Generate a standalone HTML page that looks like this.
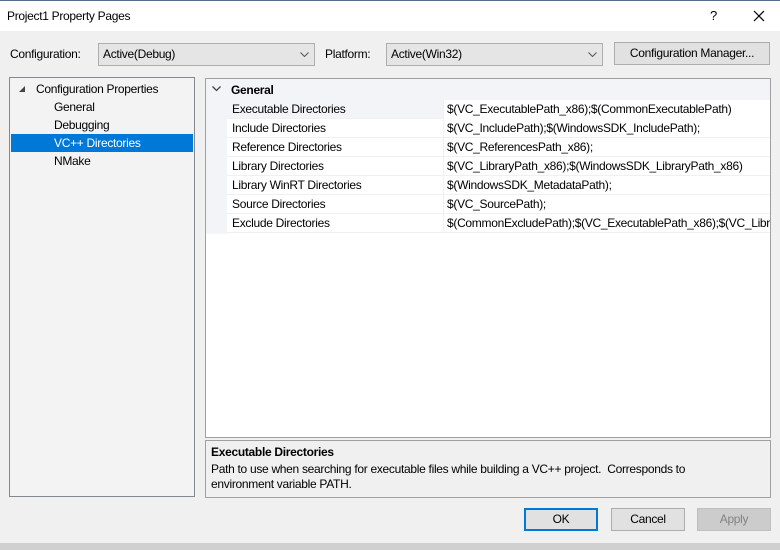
<!DOCTYPE html>
<html><head><style>
*{box-sizing:border-box;margin:0;padding:0}
body{width:780px;height:550px;background:#f0f0f0;font-family:"Liberation Sans",sans-serif;font-size:12px;letter-spacing:-0.3px;color:#000;position:relative;overflow:hidden}
.abs{position:absolute}
.title{left:0;top:0;width:780px;height:31px;background:#fff;border-top:1px solid #5a6a8a}
.combo{background:#e5e5e5;border:1px solid #adadad;height:23px;line-height:21px;padding-left:4px}
.btn{background:#e1e1e1;border:1px solid #adadad;height:23px;line-height:21px;text-align:center}
.row{position:absolute;left:21px;right:0;height:19px;line-height:19px;border-bottom:1px solid #f0f0f0;background:#fff}
.row .l{position:absolute;left:5px}
.row .v{position:absolute;left:216px;white-space:nowrap;border-left:1px solid #f0f0f0;padding-left:3px;height:19px;right:0;overflow:hidden}
</style></head><body>
<div class="abs title"><span class="abs" style="left:7px;top:8px">Project1 Property Pages</span>
<span class="abs" style="left:710px;top:7px;font-size:13px">?</span>
<svg class="abs" style="left:753px;top:9px" width="12" height="12"><path d="M1 1L11 11M11 1L1 11" stroke="#000" stroke-width="1.2"/></svg></div>
<span class="abs" style="left:10px;top:47px">Configuration:</span>
<div class="abs combo" style="left:98px;top:43px;width:217px">Active(Debug)<svg class="abs" style="right:5px;top:8px" width="9" height="6"><path d="M0.5 0.5L4.5 4.5L8.5 0.5" stroke="#555" fill="none"/></svg></div>
<span class="abs" style="left:325px;top:47px">Platform:</span>
<div class="abs combo" style="left:386px;top:43px;width:217px">Active(Win32)<svg class="abs" style="right:5px;top:8px" width="9" height="6"><path d="M0.5 0.5L4.5 4.5L8.5 0.5" stroke="#555" fill="none"/></svg></div>
<div class="abs btn" style="left:614px;top:42px;width:156px">Configuration Manager...</div>
<div class="abs" style="left:9px;top:77px;width:186px;height:420px;background:#f3f3f3;border:1px solid #828790">
<svg class="abs" style="left:9px;top:8px" width="7" height="7"><path d="M6 0L6 6L0 6Z" fill="#444"/></svg>
<span class="abs" style="left:26px;top:4px">Configuration Properties</span>
<span class="abs" style="left:44px;top:22px">General</span>
<span class="abs" style="left:44px;top:40px">Debugging</span>
<div class="abs" style="left:1px;top:56px;width:182px;height:18px;background:#0078d7"></div>
<span class="abs" style="left:44px;top:58px;color:#fff">VC++ Directories</span>
<span class="abs" style="left:44px;top:76px">NMake</span>
</div>
<div class="abs" style="left:205px;top:78px;width:566px;height:360px;background:#fff;border:1px solid #a0a0a0">
<div class="abs" style="left:0;top:0;width:21px;height:155px;background:#f3f4f8"></div>
<div class="abs" style="left:0;top:0;right:0;height:21px;background:#f3f4f8"></div>
<svg class="abs" style="left:6px;top:7px" width="9" height="6"><path d="M0.5 0.5L4.5 4.5L8.5 0.5" stroke="#444" stroke-width="1.3" fill="none"/></svg>
<b class="abs" style="left:25px;top:4px">General</b>
<div class="row" style="top:21px;background:#f3f4f8"><span class="l">Executable Directories</span><span class="v" style="background:#fff">$(VC_ExecutablePath_x86);$(CommonExecutablePath)</span></div>
<div class="row" style="top:40px"><span class="l">Include Directories</span><span class="v">$(VC_IncludePath);$(WindowsSDK_IncludePath);</span></div>
<div class="row" style="top:59px"><span class="l">Reference Directories</span><span class="v">$(VC_ReferencesPath_x86);</span></div>
<div class="row" style="top:78px"><span class="l">Library Directories</span><span class="v">$(VC_LibraryPath_x86);$(WindowsSDK_LibraryPath_x86)</span></div>
<div class="row" style="top:97px"><span class="l">Library WinRT Directories</span><span class="v">$(WindowsSDK_MetadataPath);</span></div>
<div class="row" style="top:116px"><span class="l">Source Directories</span><span class="v">$(VC_SourcePath);</span></div>
<div class="row" style="top:135px"><span class="l">Exclude Directories</span><span class="v">$(CommonExcludePath);$(VC_ExecutablePath_x86);$(VC_LibraryPath_x86)</span></div>
</div>
<div class="abs" style="left:205px;top:440px;width:566px;height:58px;border:1px solid #a0a0a0">
<b class="abs" style="left:5px;top:4px">Executable Directories</b>
<span class="abs" style="left:5px;top:21px">Path to use when searching for executable files while building a VC++ project.&nbsp; Corresponds to</span>
<span class="abs" style="left:5px;top:36px">environment variable PATH.</span>
</div>
<div class="abs btn" style="left:524px;top:508px;width:74px;border:2px solid #0078d7;line-height:19px">OK</div>
<div class="abs btn" style="left:611px;top:508px;width:74px">Cancel</div>
<div class="abs btn" style="left:697px;top:508px;width:74px;background:#ccc;border-color:#bfbfbf;color:#838383">Apply</div>
<div class="abs" style="left:0;top:543px;width:780px;height:7px;background:#d0d0d0"></div>
</body></html>
